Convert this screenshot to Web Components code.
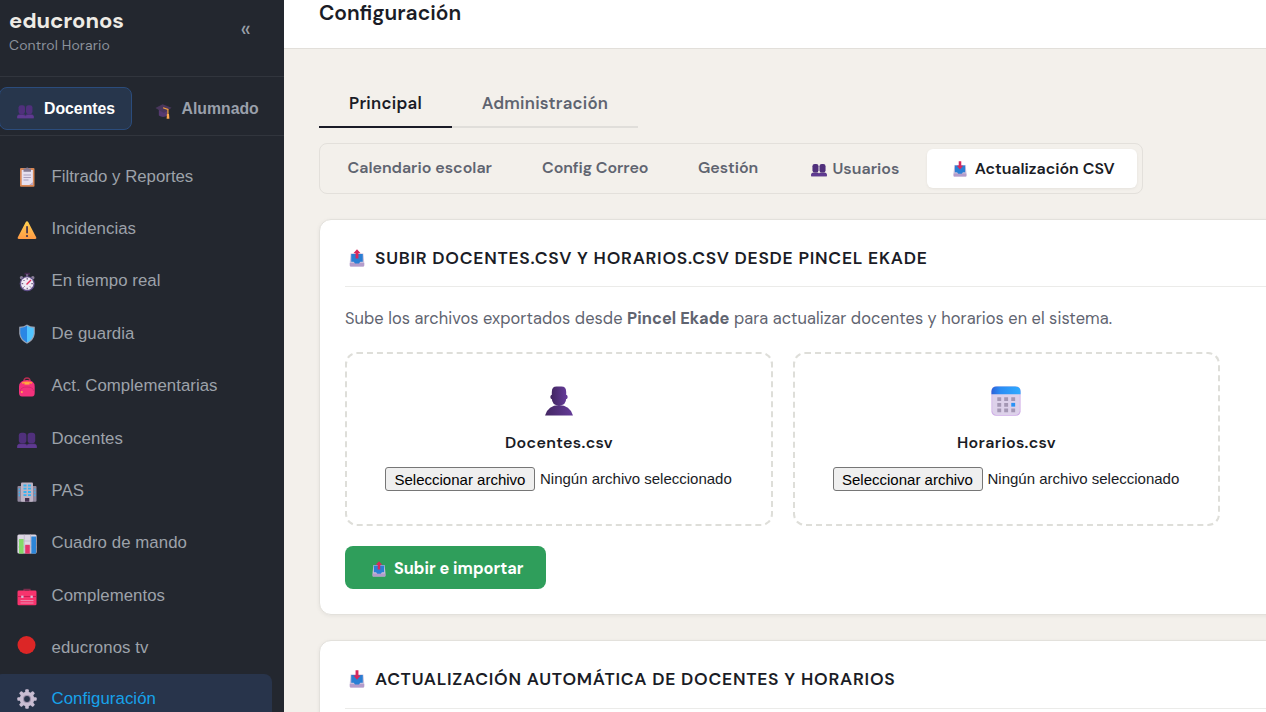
<!DOCTYPE html>
<html lang="es">
<head>
<meta charset="utf-8">
<title>educronos - Configuración</title>
<style>
  html, body { margin: 0; height: 100%; overflow: hidden; }
  body { background: #f3f0eb; color: #1a1c26; font-family: "DM Sans", Inter, "Liberation Sans", sans-serif; }
</style>
</head>
<body>
<app-shell>
  <app-sidebar slot="sidebar">
    <side-tab slot="tabs" icon="people" label="Docentes" w="71" style="width:133px" active></side-tab>
    <side-tab slot="tabs" icon="cap" label="Alumnado" w="77" style="width:137px"></side-tab>
    <nav-item icon="clipboard" label="Filtrado y Reportes" w="142.5"></nav-item>
    <nav-item icon="warning" label="Incidencias" w="84.5"></nav-item>
    <nav-item icon="stopwatch" label="En tiempo real" w="109"></nav-item>
    <nav-item icon="shield" label="De guardia" w="83"></nav-item>
    <nav-item icon="backpack" label="Act. Complementarias" w="166"></nav-item>
    <nav-item icon="people" label="Docentes" w="71.5"></nav-item>
    <nav-item icon="building" label="PAS" w="32.5"></nav-item>
    <nav-item icon="chart" label="Cuadro de mando" w="135.5"></nav-item>
    <nav-item icon="toolbox" label="Complementos" w="113.5"></nav-item>
    <nav-item icon="dot" label="educronos tv" w="97" short></nav-item>
    <nav-item icon="gear" label="Configuración" w="104.5" active></nav-item>
  </app-sidebar>

  <page-bar slot="bar"><fit-text w="142">Configuración</fit-text></page-bar>

  <main-tabs>
    <main-tab active style="width:133px"><fit-text w="73">Principal</fit-text></main-tab>
    <main-tab style="width:186px"><fit-text w="126.5">Administración</fit-text></main-tab>
  </main-tabs>

  <sub-tabs>
    <sub-tab style="width:194px"><fit-text w="145">Calendario escolar</fit-text></sub-tab>
    <sub-tab style="width:156px"><fit-text w="106">Config Correo</fit-text></sub-tab>
    <sub-tab style="width:110px"><fit-text w="60">Gestión</fit-text></sub-tab>
    <sub-tab style="width:144px" with-icon><ui-icon name="people" size="16" style="margin-right:6px"></ui-icon><fit-text w="67">Usuarios</fit-text></sub-tab>
    <sub-tab style="width:210px" with-icon active><ui-icon name="inbox" size="16" style="margin:0 7px 0 2px"></ui-icon><fit-text w="139.5">Actualización CSV</fit-text></sub-tab>
  </sub-tabs>

  <panel-card>
    <ui-icon slot="title" name="outbox" size="18"></ui-icon>
    <fit-text slot="title" w="552.5">SUBIR DOCENTES.CSV Y HORARIOS.CSV DESDE PINCEL EKADE</fit-text>
    <hint-text><fit-text w="767">Sube los archivos exportados desde <b>Pincel Ekade</b> para actualizar docentes y horarios en el sistema.</fit-text></hint-text>
    <drop-grid>
      <drop-zone icon="person" label="Docentes.csv" w="108"></drop-zone>
      <drop-zone icon="calendar" label="Horarios.csv" w="99"></drop-zone>
    </drop-grid>
    <action-button><ui-icon name="outbox" size="16"></ui-icon><fit-text w="130">Subir e importar</fit-text></action-button>
  </panel-card>

  <panel-card tall-head>
    <ui-icon slot="title" name="inbox" size="18"></ui-icon>
    <fit-text slot="title" w="520.5">ACTUALIZACIÓN AUTOMÁTICA DE DOCENTES Y HORARIOS</fit-text>
  </panel-card>
</app-shell>

<script>
const tray = arrow => `
  <path d="M3 5h14l1 9.500v3.800q0 1.200-1.200 1.200H3.200q-1.200 0-1.200-1.200v-3.800z" fill="#c9bedb"/>
  <path d="M2 15.500h16v2.800q0 1.200-1.200 1.200H3.200q-1.200 0-1.200-1.200z" fill="#b49ccb"/>
  <path d="M3.600 5.500h12.800v8.700h-2.700l-1.600 1.800H7.900l-1.600-1.800H3.600z" fill="#2a7fd4"/>
  <path d="${arrow}" fill="#d9285c"/>`;

const ICONS = {
  people: `
    <g fill="#50307c"><rect x="1.800" y="3.800" width="7.600" height="10.500" rx="2.800"/><rect x="10.600" y="3.800" width="7.600" height="10.500" rx="2.800"/>
    <path d="M.3 19v-2q0-2.600 3-2.600h4.400q2 0 2.300 1.600.3-1.600 2.300-1.600h4.400q3 0 3 2.600v2z"/></g>
    <path d="M.3 19v-1.800q0-1.600 2-2h5q2 .2 2.600 1.800.6-1.600 2.600-1.800h5q2 .4 2.200 2V19z" fill="#5f3a91"/>`,
  person: `
    <defs><linearGradient id="g" x1="0" x2="1"><stop offset="0" stop-color="#432763"/><stop offset="1" stop-color="#643b98"/></linearGradient></defs>
    <rect x="4.300" y="5.800" width="11.400" height="3" rx="1.200" fill="url(#g)"/>
    <path d="M5.200 4Q5.200.4 8.400.4h3.200Q14.800.4 14.800 4v4.200q0 4.800-4.800 4.800T5.200 8.200z" fill="url(#g)"/>
    <path d="M.7 19.600Q2.800 12.600 10 12.600t9.300 7z" fill="url(#g)"/>`,
  cap: `
    <path d="M4.500 9v7q5 3 10.500 0V9z" fill="#553a70"/>
    <path d="M.5 7L9 2.500l10.500 4.300-9 6z" fill="#49365c"/>
    <path d="M9.500 6.800l5.700 2V16" fill="none" stroke="#f6a33c" stroke-width="1.400"/>
    <path d="M14 14h2.500l.4 5.700H13.700z" fill="#ffa94f"/>`,
  clipboard: `
    <rect x="3" y="1" width="14.500" height="18.700" rx="1" fill="#d98755"/>
    <path d="M4.700 3h11.200v12.500L12.500 18H4.700z" fill="#e6e0f0"/>
    <path d="M16 15.300V18h-3.500z" fill="#b9a9c9"/>
    <path d="M6.500 1.500h2Q10.200-.7 12 1.500h2v3.300H6.500z" fill="#857b93"/>
    <path d="M6.500 8h7.500M6.500 10.500h7.500M6.500 13h5" stroke="#aaa0bd" stroke-width="1"/>`,
  warning: `
    <defs><linearGradient id="g" x2="0" y2="1"><stop offset="0" stop-color="#ffd150"/><stop offset="1" stop-color="#ff9a45"/></linearGradient></defs>
    <path d="M10 1.300q.8 0 1.200.8L19.300 17.600q.4 1.400-1 1.400H1.700q-1.400 0-1-1.400L8.800 2.100q.4-.8 1.200-.8z" fill="url(#g)"/>
    <rect x="9.200" y="6" width="1.700" height="7.500" rx=".8" fill="#3c2d4d"/><circle cx="10" cy="16" r="1.100" fill="#3c2d4d"/>`,
  stopwatch: `
    <rect x="7.500" y=".8" width="5.500" height="2" fill="#43294e"/><rect x="9" y="2" width="2.200" height="3" fill="#6e5b80"/>
    <circle cx="4.500" cy="5.700" r="1.700" fill="#8a809a"/><circle cx="15.800" cy="5.700" r="1.700" fill="#8a809a"/>
    <circle cx="10.200" cy="11.800" r="7.500" fill="#62508a"/><circle cx="10.200" cy="11.600" r="6.300" fill="#eee8f4"/>
    <path d="M10.200 6v1.600M10.200 15.800v1.600M4.600 11.700h1.600M14.300 11.700h1.600M6.500 8l1 1M6.500 15.500l1-1M14 15.500l-1-1" stroke="#54416b" stroke-width="1"/>
    <path d="M9.500 12.500l4.500-4.600" stroke="#e0305c" stroke-width="1.400"/>`,
  shield: `
    <path d="M10 .6q3 2.200 7.800 2.200v7Q17 16.500 10 19.700 3 16.500 2.200 9.800v-7Q7 2.800 10 .6z" fill="#9aa3b5"/>
    <path d="M10 1.800v16.600Q4 15.500 3.300 9.600V3.900Q7.400 3.700 10 1.800z" fill="#2a86e4"/>
    <path d="M10 1.800v16.600q6-2.900 6.700-8.800V3.900Q12.600 3.700 10 1.800z" fill="#50c4ff"/>`,
  backpack: `
    <path d="M7 4Q7 1 10 1t3 3" fill="none" stroke="#b32c50" stroke-width="1.400"/>
    <path d="M2 15.500V9.500Q2.500 3 10 3t7.700 6.500v6q.2 4-2.700 4H5q-3 0-3-4z" fill="#f4327c"/>
    <path d="M5 6q5-1.500 10 0" fill="none" stroke="#ff9b38" stroke-width="1.500"/>
    <path d="M7.500 5.500h5v2.100h-5z" fill="#ffab40"/>
    <path d="M3.500 14q0-4 6.500-4t6.500 4" fill="none" stroke="#d8286f" stroke-width="1"/>
    <circle cx="4.800" cy="15" r="1" fill="#ffb04a"/>`,
  building: `
    <rect x=".5" y="4" width="19" height="15.700" rx="1" fill="#8f879d"/><rect x="4" y=".5" width="12" height="19.200" rx="1" fill="#bdb3c4"/>
    <path d="M6.500 3.500h3M11 3.500h3M6.500 6.700h3M11 6.700h3M6.500 10h3M11 10h3M6.500 13.200h3M11 13.200h3" stroke="#36b3f0" stroke-width="1.800"/>
    <path d="M2.300 6.500v1.700M2.300 9.500v1.700M2.300 12.500v1.700M17.800 6.500v1.700M17.800 9.500v1.700M17.800 12.500v1.700" stroke="#36b3f0" stroke-width="1.300"/>
    <rect x="8" y="16" width="4.300" height="3.700" fill="#43304e"/>`,
  chart: `
    <rect x=".4" y=".4" width="19.200" height="19.200" rx="1.500" fill="#ddd7e4"/>
    <path d="M.5 7h19M.5 13h19M7.300.5v19M13.500.5v19" stroke="#bbb2c5" stroke-width=".7"/>
    <rect x="2" y="5" width="4.600" height="14.600" fill="#83d968"/><rect x="8.200" y="10.800" width="4.600" height="8.800" fill="#e3346e"/><rect x="14.300" y="2.500" width="4.700" height="17.100" fill="#2d86d9"/>`,
  toolbox: `
    <path d="M7 5V3.300h6V5" fill="none" stroke="#7a2c4c" stroke-width="1.200"/>
    <rect x=".5" y="4.600" width="19" height="14.600" rx="1.300" fill="#f8336d"/>
    <path d="M.5 10.500h19" stroke="#bb174e" stroke-width=".8"/>
    <rect x="4.200" y="9.600" width="2.300" height="2.300" fill="#d5bfdb"/><rect x="13.500" y="9.600" width="2.300" height="2.300" fill="#d5bfdb"/>
    <path d="M3.500 14.600h13M3.500 17h13" stroke="#e79aba" stroke-width=".9"/>`,
  dot: `<circle cx="9.500" cy="10" r="9" fill="#dc2626"/>`,
  gear: `
    <g fill="#c9bdd2"><circle cx="10" cy="10" r="7.300"/>
    ${[0, 45, 90, 135].map(a => `<rect x="8.200" y=".3" width="3.600" height="19.400" rx="1" transform="rotate(${a} 10 10)"/>`).join('')}</g>
    <circle cx="10" cy="10" r="4" fill="#9d90aa"/><circle cx="10" cy="10" r="2.900" fill="#28344b"/>`,
  calendar: `
    <defs><linearGradient id="g" x1="0" x2="1"><stop offset="0" stop-color="#2d62d8"/><stop offset=".3" stop-color="#2a8cf4"/><stop offset="1" stop-color="#30abff"/></linearGradient></defs>
    <rect x=".3" y=".3" width="19.400" height="19.500" rx="3" fill="#cda9e6"/><rect x=".8" y=".3" width="18.400" height="19" rx="3" fill="#ddd1ea"/>
    <path d="M.3 5.500V3.800Q.3.300 4 .3h12q3.700 0 3.700 3.500v1.700z" fill="url(#g)"/>
    <path d="M4.200 8.700h2.600M8.800 8.700h2.600M13.500 8.700h2.600M4.200 12.500h2.600M8.800 12.500h2.600M4.200 16.200h2.600M8.800 16.200h2.600M13.500 16.200h2.600" stroke="#a497b4" stroke-width="2.500"/>
    <path d="M13.500 12.500h2.600" stroke="#2a92f5" stroke-width="2.500"/>`,
  outbox: tray('M10 .2L14 4.600h-2.400V10.500H8.400V4.600H6z'),
  inbox: tray('M8.400 .2h3.200v5.800H14L10 10.700 6 6h2.400z')
};

function shadow(el, html) {
  el.attachShadow({ mode: 'open' }).innerHTML = html;
}

class UiIcon extends HTMLElement {
  connectedCallback() {
    const size = this.getAttribute('size') || 20;
    shadow(this, `
      <style>
        :host { display: block; flex: none; width: ${size}px; height: ${size}px; }
        svg { display: block; width: 100%; height: 100%; }
      </style>
      <svg viewBox="0 0 20 20">${ICONS[this.getAttribute('name')]}</svg>`);
  }
}

// Spreads a single line of text over a given width with letter-spacing
class FitText extends HTMLElement {
  connectedCallback() {
    const w = parseFloat(this.getAttribute('w'));
    shadow(this, `
      <style>
        :host { display: block; flex: none; width: ${w}px; white-space: nowrap; }
        span { display: inline-block; }
      </style>
      <span><slot></slot></span>`);
    const span = this.shadowRoot.querySelector('span');
    requestAnimationFrame(() => this.fit(span, w));
    this.fit(span, w);
  }
  fit(span, w) {
    span.style.letterSpacing = '0px';
    const natural = span.getBoundingClientRect().width;
    const spacing = (w - natural) / this.textContent.length;
    // below this the natural width is close enough, and ligatures are kept
    if (natural && Math.abs(spacing) > 0.04) span.style.letterSpacing = spacing + 'px';
  }
}

class AppShell extends HTMLElement {
  connectedCallback() {
    shadow(this, `
      <style>
        :host { display: grid; grid-template-columns: 284px 1fr; height: 100vh; overflow: hidden; }
        .page { display: flex; flex-direction: column; min-width: 0; overflow: hidden; }
        .content { padding: 30px 0 0 35px; }
      </style>
      <slot name="sidebar"></slot>
      <div class="page">
        <slot name="bar"></slot>
        <div class="content"><slot></slot></div>
      </div>`);
  }
}

class AppSidebar extends HTMLElement {
  connectedCallback() {
    shadow(this, `
      <style>
        :host { display: block; background: #23272f; overflow: hidden; color: #9aa0a9; }
        .head { display: flex; justify-content: space-between; box-sizing: border-box; height: 77px; padding: 7px 33px 0 9px; border-bottom: 1px solid #31353d; }
        .brand { font-size: 22px; line-height: 28px; font-weight: 700; color: #eeebe5; }
        .sub { font-size: 14px; line-height: 20px; color: #8b919b; }
        .fold { font-size: 23px; line-height: 20px; margin-top: 12px; color: #9aa0a9; }
        .tabs { display: flex; box-sizing: border-box; height: 59px; padding-top: 10px; border-bottom: 1px solid #31353d; }
        nav { display: flex; flex-direction: column; gap: 4px; padding-top: 15px; margin-left: -6px; width: 278px; }
      </style>
      <div class="head">
        <div>
          <div class="brand"><fit-text w="115">educronos</fit-text></div>
          <div class="sub"><fit-text w="101">Control Horario</fit-text></div>
        </div>
        <div class="fold">«</div>
      </div>
      <div class="tabs"><slot name="tabs"></slot></div>
      <nav><slot></slot></nav>`);
  }
}

class SideTab extends HTMLElement {
  connectedCallback() {
    shadow(this, `
      <style>
        :host { display: flex; align-items: center; flex: none; box-sizing: border-box; height: 43px; margin-left: -1px; padding-left: 17px; margin-right: 5.5px;
          border: 1px solid transparent; border-radius: 8px; font: 700 15.8px "Liberation Sans", Arial, sans-serif; color: #9aa0ab; }
        :host([active]) { background: #27364c; border-color: #2b4c7c; color: #fff; }
        ui-icon { margin: 4px 10px 0 0; }
      </style>
      <ui-icon name="${this.getAttribute('icon')}" size="17"></ui-icon>
      <fit-text w="${this.getAttribute('w')}">${this.getAttribute('label')}</fit-text>`);
  }
}

class NavItem extends HTMLElement {
  connectedCallback() {
    shadow(this, `
      <style>
        :host { display: flex; align-items: center; flex: none; height: 48.4px; padding-left: 22.500px; border-radius: 8px;
          font: 16.8px/24px "Liberation Sans", Arial, sans-serif; color: #9da2aa; }
        :host([short]) { height: 47.4px; }
        :host([active]) { background: #28344b; color: #17a2ea; }
        ui-icon { margin: 4px 15px 0 0; }
        fit-text { margin-top: 3px; }
        :host([short]) ui-icon { margin-top: -2px; }
        :host([short]) fit-text, :host([active]) fit-text { margin-top: 2.6px; }
        :host([active]) ui-icon { margin-top: 2px; }
      </style>
      <ui-icon name="${this.getAttribute('icon')}" size="20"></ui-icon>
      <fit-text w="${this.getAttribute('w')}">${this.getAttribute('label')}</fit-text>`);
  }
}

class PageBar extends HTMLElement {
  connectedCallback() {
    shadow(this, `
      <style>
        :host { display: block; flex: none; box-sizing: border-box; height: 49px; padding-left: 35px; background: #fff; border-bottom: 1px solid #e2dfda;
          font-size: 21px; line-height: 26px; font-weight: 600; color: #1a1c26; }
      </style>
      <slot></slot>`);
  }
}

class MainTabs extends HTMLElement {
  connectedCallback() {
    shadow(this, `
      <style>
        :host { display: flex; height: 49px; margin-bottom: 15px; }
      </style>
      <slot></slot>`);
  }
}

class MainTab extends HTMLElement {
  connectedCallback() {
    shadow(this, `
      <style>
        :host { display: flex; justify-content: center; align-items: center; flex: none; box-sizing: border-box; padding-top: 1px; border-bottom: 2px solid #e0deda;
          font-size: 16.8px; font-weight: 600; color: #5f6470; }
        :host([active]) { color: #1a1c26; border-color: #1a1b27; }
      </style>
      <slot></slot>`);
  }
}

class SubTabs extends HTMLElement {
  connectedCallback() {
    shadow(this, `
      <style>
        :host { display: flex; box-sizing: border-box; width: 824px; height: 51px; padding: 5px 3px; margin-bottom: 25px; border: 1px solid #e3e0db; border-radius: 8px; }
      </style>
      <slot></slot>`);
  }
}

class SubTab extends HTMLElement {
  connectedCallback() {
    shadow(this, `
      <style>
        :host { display: flex; justify-content: center; align-items: center; flex: none; box-sizing: border-box; height: 39px; padding-bottom: 2px;
          border-radius: 6px; font-size: 16px; font-weight: 600; color: #5f6470; }
        :host([with-icon]) { padding-bottom: 0; }
        :host([active]) { background: #fff; color: #1a1c26; box-shadow: 0 1px 3px rgba(0,0,0,.06); }
      </style>
      <slot></slot>`);
  }
}

class PanelCard extends HTMLElement {
  connectedCallback() {
    shadow(this, `
      <style>
        :host { display: block; box-sizing: border-box; width: 1000px; height: 396px; margin-bottom: 25px; padding: 0 25px; background: #fff;
          border: 1px solid #e3e1dc; border-radius: 12px; box-shadow: 0 1px 4px rgba(0,0,0,.06); }
        header { display: flex; align-items: center; gap: 9px; box-sizing: border-box; height: 67px; padding: 10px 0 0 3px; border-bottom: 1px solid #ebebe9;
          font-size: 17.5px; font-weight: 600; color: #1a1c26; }
        :host([tall-head]) header { height: 68px; padding-bottom: 1px; }
      </style>
      <header><slot name="title"></slot></header>
      <slot></slot>`);
  }
}

class HintText extends HTMLElement {
  connectedCallback() {
    shadow(this, `
      <style>
        :host { display: block; padding-top: 20px; height: 45px; font-size: 16.4px; line-height: 24px; color: #5f6470; }
      </style>
      <slot></slot>`);
  }
}

class DropGrid extends HTMLElement {
  connectedCallback() {
    shadow(this, `
      <style>
        :host { display: grid; grid-template-columns: 428px 427px; gap: 20px; }
      </style>
      <slot></slot>`);
  }
}

class DropZone extends HTMLElement {
  connectedCallback() {
    shadow(this, `
      <style>
        :host { display: flex; flex-direction: column; align-items: center; box-sizing: border-box; height: 174px; padding-top: 32px; border: 2px dashed #deded9; border-radius: 12px; }
        ui-icon { margin-right: 1px; }
        .name { margin-top: 15px; font-size: 16px; line-height: 24px; font-weight: 600; }
        .file { display: flex; align-items: center; gap: 5px; margin-top: 12px; margin-right: 1px; font: 15px "Liberation Sans", Arial, sans-serif; color: #1a1c26; }
        .file > fit-text { margin-top: -1px; }
        .pick { display: flex; justify-content: center; align-items: center; box-sizing: border-box; width: 150px; height: 24px; padding-top: 1px;
          background: #efefef; border: 1px solid #767676; border-radius: 3px; color: #000; }
      </style>
      <ui-icon name="${this.getAttribute('icon')}" size="30"></ui-icon>
      <div class="name"><fit-text w="${this.getAttribute('w')}">${this.getAttribute('label')}</fit-text></div>
      <div class="file">
        <div class="pick"><fit-text w="131">Seleccionar archivo</fit-text></div>
        <fit-text w="192">Ningún archivo seleccionado</fit-text>
      </div>`);
  }
}

class ActionButton extends HTMLElement {
  connectedCallback() {
    shadow(this, `
      <style>
        :host { display: flex; align-items: center; gap: 7px; box-sizing: border-box; width: 201px; height: 43px; margin-top: 20px; padding: 2px 0 0 26px;
          border-radius: 8px; background: #2f9e5b; color: #fff; font-size: 16.3px; font-weight: 700; }
      </style>
      <slot></slot>`);
  }
}

customElements.define('ui-icon', UiIcon);
customElements.define('app-shell', AppShell);
customElements.define('app-sidebar', AppSidebar);
customElements.define('side-tab', SideTab);
customElements.define('nav-item', NavItem);
customElements.define('page-bar', PageBar);
customElements.define('main-tabs', MainTabs);
customElements.define('main-tab', MainTab);
customElements.define('sub-tabs', SubTabs);
customElements.define('sub-tab', SubTab);
customElements.define('panel-card', PanelCard);
customElements.define('hint-text', HintText);
customElements.define('drop-grid', DropGrid);
customElements.define('drop-zone', DropZone);
customElements.define('action-button', ActionButton);
customElements.define('fit-text', FitText);
</script>
</body>
</html>
